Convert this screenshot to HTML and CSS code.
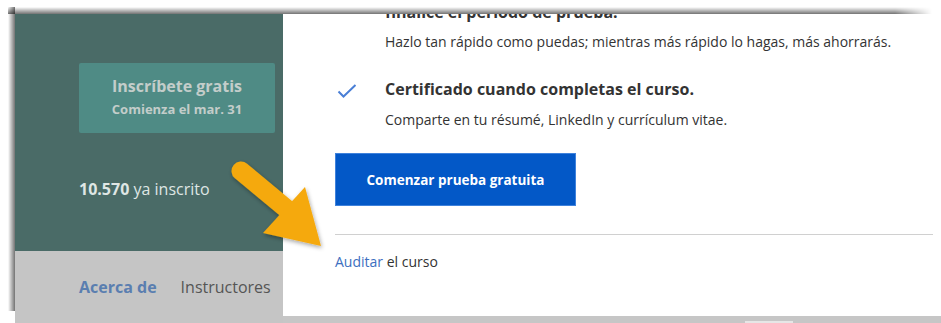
FILE: index.html
```html
<!DOCTYPE html>
<html lang="es">
<head>
<meta charset="utf-8">
<title>Curso</title>
<link rel="stylesheet" href="styles.css">
</head>
<body>
<div class="shot">
  <div class="left">
    <div class="hero">
      <button class="enroll">
        <span class="enroll-main">Inscríbete gratis</span>
        <span class="enroll-sub">Comienza el mar. 31</span>
      </button>
      <p class="enrolled"><b>10.570</b> ya inscrito</p>
    </div>
    <nav class="tabs">
      <span class="tab active">Acerca de</span>
      <span class="tab">Instructores</span>
    </nav>
  </div>
  <div class="right">
    <div class="modal">
      <div class="feature first">
        <span class="check"></span>
        <div>
          <p class="f-title">finalice el período de prueba.</p>
          <p class="f-desc d1">Hazlo tan rápido como puedas; mientras más rápido lo hagas, más ahorrarás.</p>
        </div>
      </div>
      <div class="feature second">
        <span class="check">
          <svg width="20" height="14" viewBox="0 0 20 14"><path d="M1.5 7.5 L6.5 12.5 L18.5 1" fill="none" stroke="#4a7fd6" stroke-width="2"/></svg>
        </span>
        <div>
          <p class="f-title">Certificado cuando completas el curso.</p>
          <p class="f-desc d2">Comparte en tu résumé, LinkedIn y currículum vitae.</p>
        </div>
      </div>
      <button class="trial">Comenzar prueba gratuita</button>
      <hr class="divider">
      <p class="audit"><a class="audit-link">Auditar</a> el curso</p>
    </div>
    <div class="strip"><span class="strip-hl"></span></div>
  </div>
</div>
<svg class="arrow" width="130" height="120" viewBox="0 0 130 120">
  <defs>
    <filter id="sh" x="-20%" y="-20%" width="140%" height="140%">
      <feDropShadow dx="1" dy="2" stdDeviation="2" flood-color="#000" flood-opacity="0.35"/>
    </filter>
  </defs>
  <g filter="url(#sh)" fill="#f5a90c">
    <line x1="26" y1="26" x2="73" y2="65" stroke="#f5a90c" stroke-width="19" stroke-linecap="round"/>
    <polygon points="48,88 90,42 106,101"/>
  </g>
</svg>
</body>
</html>
```

FILE: styles.css
```css
html, body {
  margin: 0;
  padding: 0;
}
body {
  width: 941px;
  height: 323px;
  overflow: hidden;
  background: #ffffff;
  position: relative;
  font-family: "Open Sans", "Liberation Sans", sans-serif;
}
p { margin: 0; }

.shot {
  position: relative;
  margin: 14px 0 0 15px;
  width: 926px;
  height: 309px;
  display: grid;
  grid-template-columns: 268px 1fr;
}
.shot::before {
  content: "";
  position: absolute;
  left: -7px;
  top: -7px;
  width: 924px;
  height: 7px;
  background: linear-gradient(to top, rgba(0,0,0,0.55), rgba(0,0,0,0));
  -webkit-mask-image: linear-gradient(to right, #000 96%, transparent);
  mask-image: linear-gradient(to right, #000 96%, transparent);
}
.shot::after {
  content: "";
  position: absolute;
  left: -7px;
  top: -7px;
  width: 7px;
  height: 304px;
  background: linear-gradient(to left, rgba(0,0,0,0.55), rgba(0,0,0,0));
}

.left {
  display: flex;
  flex-direction: column;
}
.hero {
  background: #4a6b67;
  height: 237px;
  padding: 49px 0 0 64px;
  box-sizing: border-box;
}
.enroll {
  display: flex;
  flex-direction: column;
  align-items: center;
  width: 196px;
  height: 70px;
  border: 0;
  border-radius: 2px;
  background: #4f8b85;
  color: #c3cdca;
  font-family: inherit;
  padding: 12px 0 0;
  box-sizing: border-box;
}
.enroll-main {
  font-size: 16px;
  font-weight: 700;
  line-height: 22px;
}
.enroll-sub {
  font-size: 13px;
  font-weight: 700;
  line-height: 18px;
  margin-top: 3px;
}
.enrolled {
  margin-top: 46px;
  font-size: 16px;
  line-height: 20px;
  color: #dfe6e4;
}
.enrolled b { font-weight: 700; }

.tabs {
  flex: 1;
  background: #c5c5c5;
  display: flex;
  gap: 24px;
  padding: 25px 0 0 64px;
}
.tab {
  font-size: 16px;
  line-height: 22px;
  color: #555555;
}
.tab.active {
  color: #5a7eb0;
  font-weight: 700;
}

.right {
  display: flex;
  flex-direction: column;
}
.modal {
  background: #ffffff;
  height: 302px;
  overflow: hidden;
  padding-left: 52px;
  border-bottom-left-radius: 3px;
  box-sizing: border-box;
}
.feature {
  display: flex;
  color: #333333;
}
.check {
  width: 50px;
  flex: none;
  padding-top: 3px;
  padding-left: 2px;
  box-sizing: border-box;
}
.f-title {
  font-size: 16px;
  font-weight: 700;
  line-height: 22px;
}
.f-desc {
  font-size: 14px;
  line-height: 20px;
}
.feature.first { margin-top: -13px; }
.d1 { margin-top: 9px; }
.feature.second { margin-top: 26px; }
.d2 { margin-top: 10px; }

.trial {
  display: block;
  margin-top: 23px;
  width: 241px;
  height: 53px;
  background: #0358c7;
  border: 1px solid #3f82dc;
  color: #ffffff;
  font-family: inherit;
  font-size: 13.5px;
  font-weight: 700;
}
.divider {
  margin: 28px 0 0;
  width: 598px;
  border: 0;
  height: 1px;
  background: #d0d0d0;
}
.audit {
  margin-top: 17px;
  font-size: 14px;
  line-height: 20px;
  color: #333333;
}
.audit-link { color: #3d6fc0; }

.strip {
  flex: 1;
  background: #c6c6c6;
  position: relative;
}
.strip-hl {
  position: absolute;
  left: 462px;
  width: 48px;
  bottom: 0;
  height: 2px;
  background: #e6e6e6;
}

.arrow {
  position: absolute;
  left: 215px;
  top: 145px;
}
```
